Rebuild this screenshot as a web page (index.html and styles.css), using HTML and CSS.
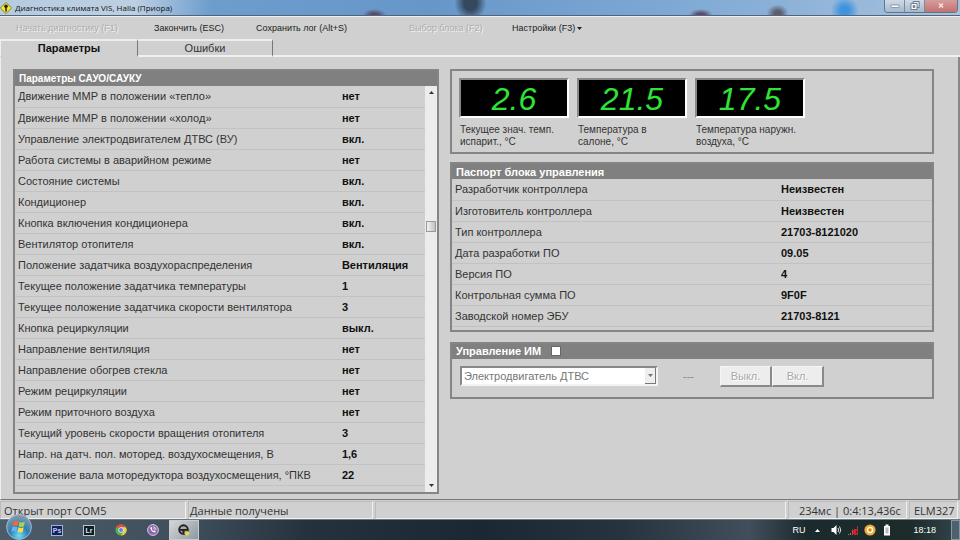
FILE: index.html
```html
<!DOCTYPE html>
<html lang="ru">
<head>
  <meta charset="UTF-8" />
  <meta name="viewport" content="width=device-width, initial-scale=1.0" />
  <title>Диагностика климата VIS, Halla (Приора)</title>
  <link rel="stylesheet" href="styles.css">
</head>
<body>
  <!-- Заголовок окна -->
  <header class="titlebar">
    <svg class="app-icon" viewBox="0 0 12 12"><path d="M6 0.4 11.6 6 6 11.6 0.4 6Z" fill="#f6e928" stroke="#77701c" stroke-width="0.8"/><circle cx="6" cy="4.3" r="1.8" fill="#222"/><path d="M5.3 5h1.5v4.4H5.3Z" fill="#222"/></svg>
    <span class="window-title">Диагностика климата VIS, Halla (Приора)</span>
    <div class="window-buttons">
      <button type="button" aria-label="Свернуть"><svg viewBox="0 0 12 10"><rect x="2" y="4.5" width="8" height="2.6" rx="0.6" fill="#fff" stroke="#66758a" stroke-width="0.7"/></svg></button>
      <button type="button" aria-label="Развернуть"><svg viewBox="0 0 12 10"><path d="M4.2 1h6v6h-6Z" fill="#dde5ee" stroke="#56657a" stroke-width="0.8"/><path d="M2 3h6v6H2Z" fill="#fff" stroke="#56657a" stroke-width="0.8"/><path d="M4 5h2v2H4Z" fill="#8ea0b6" stroke="#56657a" stroke-width="0.6"/></svg></button>
      <button class="close" type="button" aria-label="Закрыть"><svg viewBox="0 0 12 10"><path d="M4 3l4 4M8 3l-4 4" stroke="#f8e4e2" stroke-width="1.5"/></svg></button>
    </div>
  </header>

  <!-- Меню -->
  <nav class="menu">
    <button type="button" disabled>Начать диагностику (F1)</button>
    <button type="button">Закончить (ESC)</button>
    <button type="button">Сохранить лог (Alt+S)</button>
    <button type="button" disabled>Выбор блока (F2)</button>
    <button type="button">Настройки (F3)<svg class="menu-arrow" viewBox="0 0 5 3"><path d="M0 0h5L2.5 3Z" fill="#222"/></svg></button>
  </nav>

  <div class="tabs">
    <button class="tab active" type="button">Параметры</button>
    <button class="tab" type="button">Ошибки</button>
    <div class="tabs-rest"></div>
  </div>

  <main class="page">
    <!-- Список параметров -->
    <section class="group params">
      <h2>Параметры САУО/САУКУ</h2>
      <div class="params-body">
        <div class="params-list">
          <table>
            <tr><th>Движение ММР в положении «тепло»</th><td>нет</td></tr>
            <tr><th>Движение ММР в положении «холод»</th><td>нет</td></tr>
            <tr><th>Управление электродвигателем ДТВС (ВУ)</th><td>вкл.</td></tr>
            <tr><th>Работа системы в аварийном режиме</th><td>нет</td></tr>
            <tr><th>Состояние системы</th><td>вкл.</td></tr>
            <tr><th>Кондиционер</th><td>вкл.</td></tr>
            <tr><th>Кнопка включения кондиционера</th><td>вкл.</td></tr>
            <tr><th>Вентилятор отопителя</th><td>вкл.</td></tr>
            <tr><th>Положение задатчика воздухораспределения</th><td>Вентиляция</td></tr>
            <tr><th>Текущее положение задатчика температуры</th><td>1</td></tr>
            <tr><th>Текущее положение задатчика скорости вентилятора</th><td>3</td></tr>
            <tr><th>Кнопка рециркуляции</th><td>выкл.</td></tr>
            <tr><th>Направление вентиляция</th><td>нет</td></tr>
            <tr><th>Направление обогрев стекла</th><td>нет</td></tr>
            <tr><th>Режим рециркуляции</th><td>нет</td></tr>
            <tr><th>Режим приточного воздуха</th><td>нет</td></tr>
            <tr><th>Текущий уровень скорости вращения отопителя</th><td>3</td></tr>
            <tr><th>Напр. на датч. пол. моторед. воздухосмещения, В</th><td>1,6</td></tr>
            <tr><th>Положение вала моторедуктора воздухосмещения, °ПКВ</th><td>22</td></tr>
            <tr><th>Напр. на датч. пол. моторед. воздухораспределения, В</th><td>0,9</td></tr>
          </table>
        </div>
        <div class="scrollbar">
          <svg viewBox="0 0 5 3"><path d="M0 3h5L2.5 0Z" fill="#333"/></svg>
          <span class="space-above"></span>
          <span class="thumb"></span>
          <span class="space-below"></span>
          <svg viewBox="0 0 5 3"><path d="M0 0h5L2.5 3Z" fill="#333"/></svg>
        </div>
      </div>
    </section>

    <div class="side">
      <!-- Температуры -->
      <section class="group gauges">
        <div class="gauge"><output>2.6</output><p>Текущее знач. темп. испарит., °C</p></div>
        <div class="gauge"><output>21.5</output><p>Температура в салоне, °C</p></div>
        <div class="gauge"><output>17.5</output><p>Температура наружн. воздуха, °C</p></div>
      </section>

      <section class="group passport">
        <h2>Паспорт блока управления</h2>
        <table>
          <tr><th>Разработчик контроллера</th><td>Неизвестен</td></tr>
          <tr><th>Изготовитель контроллера</th><td>Неизвестен</td></tr>
          <tr><th>Тип контроллера</th><td>21703-8121020</td></tr>
          <tr><th>Дата разработки ПО</th><td>09.05</td></tr>
          <tr><th>Версия ПО</th><td>4</td></tr>
          <tr><th>Контрольная сумма ПО</th><td>9F0F</td></tr>
          <tr><th>Заводской номер ЭБУ</th><td>21703-8121</td></tr>
        </table>
      </section>

      <section class="group control">
        <h2><label for="controlOn">Управление ИМ</label><input type="checkbox" id="controlOn"></h2>
        <div class="control-row">
          <div class="select-box">
            <select aria-label="Исполнительный механизм" disabled>
              <option>Электродвигатель ДТВС</option>
            </select>
            <span class="select-arrow"><svg viewBox="0 0 5 3"><path d="M0 0h5L2.5 3Z" fill="#777"/></svg></span>
          </div>
          <span class="state">---</span>
          <div class="switch">
            <button type="button" disabled>Выкл.</button>
            <button type="button" disabled>Вкл.</button>
          </div>
        </div>
      </section>
    </div>
  </main>

  <!-- Строка состояния -->
  <footer class="statusbar">
    <span class="port">Открыт порт COM5</span>
    <span class="data">Данные получены</span>
    <span class="empty"></span>
    <span class="time">234мс | 0:4:13,436с</span>
    <span class="adapter">ELM327</span>
  </footer>

  <!-- Панель задач -->
  <div class="taskbar">
    <button class="task start" type="button" aria-label="Пуск"><svg viewBox="0 0 26 26">
      <defs><radialGradient id="orb" cx="50%" cy="85%" r="75%"><stop offset="0" stop-color="#6fe0f6"/><stop offset="0.5" stop-color="#2b7fb4"/><stop offset="1" stop-color="#7d97ac"/></radialGradient></defs>
      <circle cx="13" cy="13" r="12.4" fill="url(#orb)" stroke="#a9c9dc" stroke-width="0.8"/>
      <path d="M7.5 8q2.6-1.800 5.200-.5l-1 4.600q-2.600-1.200-5.300.3Z" fill="#ef6a35"/><path d="M13.600 7.900q2.500 1.200 5.300-.2l-1 4.600q-2.600 1.300-5.300 0Z" fill="#a5d651"/>
      <path d="M6.200 13.300q2.600-1.500 5.200-.3l-1 4.600q-2.600-1.300-5.200.3Z" fill="#63b5ef"/><path d="M12.400 13.300q2.600 1.200 5.300 0l-1 4.600q-2.700 1.300-5.300 0Z" fill="#fbd94f"/>
    </svg></button>
    <button class="task" type="button"><span class="adobe ps">Ps</span></button>
    <button class="task" type="button"><span class="adobe lr">Lr</span></button>
    <button class="task" type="button" aria-label="Chrome"><svg viewBox="0 0 12 12"><circle cx="6" cy="6" r="5.6" fill="#5aab4c"/><path d="M6 6 1.1 3.2A5.6 5.6 0 0 1 10.9 3.2Z" fill="#db5143"/><path d="M6 3.2h4.9A5.6 5.6 0 0 1 6 11.6l2.4-4.2Z" fill="#f5cc45"/><circle cx="6" cy="6" r="2.7" fill="#eee"/><circle cx="6" cy="6" r="2" fill="#4b8bd8"/></svg></button>
    <button class="task" type="button" aria-label="Viber"><svg viewBox="0 0 12 12"><circle cx="6" cy="6" r="5.4" fill="#8b68aa" stroke="#d8c9e4" stroke-width="1"/><path d="M3.5 3.4c.7-.9 1.2-.3 1.6.5.2.5-.5.7-.3 1.2.4.9 1 1.5 1.8 1.8.5.2.7-.6 1.2-.3.9.5 1.2.9.4 1.6C6.7 9.1 2.8 5.6 3.5 3.4Z" fill="#fff"/><path d="M6.2 2.8q2.7.2 2.9 3M6.3 4.2q1.3.2 1.5 1.5" fill="none" stroke="#fff" stroke-width="0.7"/></svg></button>
    <button class="task current" type="button" aria-label="Диагностика"><svg viewBox="0 0 12 12"><circle cx="5.5" cy="5.6" r="4.3" fill="#aaa" stroke="#222" stroke-width="1.9"/><path d="M2 5h7v1.8H6.8L6.3 9H4.7L4.2 6.8H2Z" fill="#222"/><path d="M9 6.7 11.8 9.3 9 11.9 6.2 9.3Z" fill="#eadb45"/></svg></button>
    <div class="tray">
      <span class="lang">RU</span>
      <svg class="tray-up" viewBox="0 0 5 3"><path d="M0 3h5L2.5 0Z" fill="#fff"/></svg>
      <svg viewBox="0 0 12 12"><path d="M1.5 4h2L6.5 1v10l-3-3h-2Z" fill="#fff"/><path d="M8 4q1.3 2 0 4M9.5 2.5q2.5 3.5 0 7" fill="none" stroke="#ddd"/></svg>
      <svg viewBox="0 0 12 12"><path d="M1 10h1v1H1ZM3 9h1v2H3ZM5 7h1v4H5Z" fill="#b96a6a"/><path d="M7 5h2v6H7ZM10 2h1v9h-1Z" fill="#a33"/><path d="M5 5.5l5 5M10 5.5l-5 5" stroke="#c8262b" stroke-width="1.6"/></svg>
      <svg viewBox="0 0 12 12"><circle cx="6" cy="6" r="5.6" fill="#efaa31"/><circle cx="6" cy="6" r="2.6" fill="none" stroke="#fff" stroke-width="1.3"/><circle cx="6" cy="6" r="1" fill="#c97d12"/></svg>
      <svg viewBox="0 0 12 12"><path d="M4.5.5h3V2H9v9.500H3V2h1.500Z" fill="#fff"/><path d="M4.5 3.5h3v6h-3Z" fill="#bbb"/></svg>
      <span class="clock">18:18</span>
    </div>
    <button class="show-desktop" type="button" aria-label="Свернуть все окна"></button>
  </div>
</body>
</html>
```
FILE: styles.css
```css
* {
  box-sizing: border-box;
}
body {
  margin: 0;
  height: 100vh;
  display: flex;
  flex-direction: column;
  overflow: hidden;
  background: #d0d0d0;
  color: #333;
  font-family: "Liberation Sans", Arial, sans-serif;
  font-size: 11px;
}
button {
  font-family: inherit;
  padding: 0;
  margin: 0;
  border: none;
  background: none;
  color: inherit;
}
svg {
  display: block;
  flex: none;
}

/* Заголовок окна: сквозь стекло виден рабочий стол */
.titlebar {
  display: flex;
  align-items: flex-start;
  flex: none;
  height: 16px;
  border-bottom: 1px solid #536478;
  background:
    radial-gradient(ellipse 16px 18px at 49% 20%, #34485e 40%, transparent 100%),
    radial-gradient(ellipse 12px 6px at 73% 100%, #5b4b6d 30%, transparent 100%),
    radial-gradient(ellipse 11px 9px at 81% 90%, #5d5d70 30%, transparent 100%),
    radial-gradient(ellipse 12px 6px at 39% 100%, #5b4b6d 30%, transparent 100%),
    radial-gradient(ellipse 14px 14px at 88% 70%, #3f93df 30%, transparent 100%),
    linear-gradient(to right, #b5cbe0, #bdd0e2 14%, #6d9dcd 22%, #6797c9 45%, #79a5d2 65%, #8ab0d8 80%, #a9c2dc);
}
.app-icon {
  width: 12px;
  height: 12px;
  margin: 2px 3px 0 0;
}
.window-title {
  flex: 1;
  font-family: "Open Sans", sans-serif;
  font-size: 8px;
  line-height: 15px;
  color: #111;
}
.window-buttons {
  display: flex;
  margin-right: 2px;
  border: 1px solid #63758a;
  border-top: none;
  border-radius: 0 0 4px 4px;
  overflow: hidden;
}
.window-buttons button {
  display: flex;
  justify-content: center;
  width: 20px;
  height: 12px;
  border-right: 1px solid #7b8b9e;
  background: linear-gradient(#cfdae6, #a5b8cc);
}
.window-buttons button.close {
  width: 32px;
  border-right: none;
  background: linear-gradient(#d79c9b, #c07270);
}
.window-buttons svg {
  width: 12px;
  height: 11px;
}

/* Меню */
.menu {
  display: grid;
  grid-template-columns: 138px 102px 153px 103px auto;
  justify-content: start;
  flex: none;
  height: 23px;
  padding-left: 16px;
  border-top: 1px solid #eee;
}
.menu button {
  display: flex;
  align-items: center;
  font-size: 9px;
  white-space: nowrap;
  color: #222;
}
.menu button:disabled {
  color: #adadad;
  text-shadow: 1px 1px 0 #f2f2f2;
}
.menu-arrow {
  width: 5px;
  height: 3px;
  margin-left: 2px;
}

/* Вкладки */
.tabs {
  display: flex;
  flex: none;
  height: 18px;
}
.tab {
  width: 135px;
  border-top: 2px solid #ededed;
  border-right: 1px solid #777;
  border-bottom: 2px solid #f0f0f0;
  font-size: 11px;
  line-height: 12px;
}
.tab.active {
  width: 138px;
  border-bottom-color: transparent;
  border-left: 1px solid #f0f0f0;
  font-weight: bold;
  color: #111;
}
.tabs-rest {
  flex: 1;
  border-bottom: 2px solid #f0f0f0;
}

.page {
  display: grid;
  grid-template-columns: 426fr 484fr;
  gap: 11px;
  flex: 1;
  min-height: 0;
  padding: 12px 24px 5px 12px;
  border-left: 1px solid #eee;
  border-right: 2px solid #888;
  border-bottom: 1px solid #777;
}
.group {
  border: 2px solid #858585;
}
.group h2 {
  display: flex;
  align-items: center;
  flex: none;
  height: 15px;
  margin: 0;
  padding: 0 4px;
  background: #808080;
  color: #fff;
  font-size: 11px;
}
table {
  width: 100%;
  border-collapse: collapse;
  table-layout: fixed;
}
th, td {
  height: 21px;
  padding: 0 3px;
  border-bottom: 1px solid #c2c2c2;
  text-align: left;
  white-space: nowrap;
}
th {
  font-weight: normal;
}
td {
  font-weight: bold;
  color: #111;
}

/* Список параметров */
.params {
  display: flex;
  flex-direction: column;
  min-height: 0;
}
.params h2 {
  font-size: 10px;
}
.params-body {
  display: flex;
  flex: 1;
  min-height: 0;
}
.params-list {
  flex: 1;
  overflow: hidden;
}
.params-list th {
  width: 79%;
}
.scrollbar {
  display: flex;
  flex-direction: column;
  align-items: center;
  width: 12px;
  padding: 5px 0;
  background: #ececec;
}
.scrollbar svg {
  width: 5px;
  height: 3px;
}
.space-above {
  flex: 127;
}
.space-below {
  flex: 251;
}
.thumb {
  width: 10px;
  height: 11px;
  border: 1px solid #999;
  background: linear-gradient(to right, #f2f2f2, #c2c2c2);
}

.side {
  display: flex;
  flex-direction: column;
  gap: 8px;
}

/* Температуры */
.gauges {
  display: flex;
  gap: 8px;
  height: 85px;
  padding: 7px;
}
.gauge {
  width: 110px;
}
.gauge output {
  display: block;
  height: 40px;
  border: 2px solid #fff;
  border-top-color: #888;
  border-left-color: #888;
  background: #000;
  color: #2fe437;
  font-family: "Liberation Sans Narrow", "Liberation Sans", sans-serif;
  font-size: 32px;
  font-style: italic;
  line-height: 38px;
  text-align: center;
}
.gauge p {
  margin: 6px 0 0;
  padding: 0 6px 0 1px;
  font-size: 10px;
  line-height: 12px;
}

/* Паспорт */
.passport {
  padding-bottom: 3px;
}
.passport th {
  width: 326px;
}

/* Управление */
.control {
  margin-top: 2px;
}
.control h2 input {
  appearance: none;
  width: 10px;
  height: 10px;
  margin: 0 0 0 10px;
  border: 1px solid #666;
  background: #fff;
}
.control-row {
  display: flex;
  align-items: center;
  padding: 7px 8px 10px;
}
.select-box {
  position: relative;
  width: 198px;
}
select {
  display: block;
  appearance: none;
  width: 100%;
  height: 20px;
  padding: 0 2px;
  border: 2px solid #f2f2f2;
  border-top-color: #888;
  border-left-color: #888;
  border-radius: 0;
  background: #fff;
  color: #777;
  font-family: inherit;
  font-size: 11px;
  opacity: 1;
}
.select-arrow {
  position: absolute;
  top: 2px;
  right: 2px;
  bottom: 2px;
  width: 11px;
  display: flex;
  align-items: center;
  justify-content: center;
  border-right: 1px solid #777;
  border-bottom: 1px solid #777;
  background: #eee;
  pointer-events: none;
}
.select-arrow svg {
  width: 5px;
  height: 3px;
}
.state {
  width: 62px;
  padding-left: 25px;
  color: #888;
}
.switch {
  display: flex;
}
.switch button {
  width: 52px;
  height: 21px;
  border: 1px solid #f6f6f6;
  border-right: 2px solid #8a8a8a;
  border-bottom: 2px solid #8a8a8a;
  background: #ededed;
  color: #aaa;
  font-size: 11px;
  text-shadow: 1px 1px 0 #fff;
}

/* Строка состояния */
.statusbar {
  display: flex;
  flex: none;
  gap: 2px;
  height: 19px;
  padding: 1px 2px 0 0;
  font-family: "Open Sans", sans-serif;
  font-size: 11px;
}
.statusbar span {
  border: 1px solid #f0f0f0;
  border-top-color: #bbb;
  border-left-color: #bbb;
  padding-left: 3px;
  line-height: 17px;
  white-space: nowrap;
}
.statusbar .port {
  width: 186px;
}
.statusbar .data {
  width: 185px;
  padding-left: 1px;
}
.statusbar .empty {
  flex: 1;
}
.statusbar .time {
  width: 119px;
  padding-left: 10px;
}
.statusbar .adapter {
  width: 49px;
  padding-left: 4px;
}

/* Панель задач */
.taskbar {
  display: flex;
  flex: none;
  height: 21px;
  padding-left: 3px;
  border-top: 1px solid #6c7883;
  background: linear-gradient(to right, #4c5c69, #3e4e5b 20%, #25323e 32%, #1b2732 50%, #263440 65%, #414f5c 78%, #1b2a2d 84%, #1c2c2a 95%, #33464e);
}
.task {
  display: flex;
  align-items: center;
  justify-content: center;
  width: 32px;
}
.task svg {
  width: 12px;
  height: 12px;
}
/* кнопка «Пуск» выступает над панелью */
.task.start {
  align-items: flex-end;
}
.task.start svg {
  width: 26px;
  height: 26px;
}
.task.current {
  width: 30px;
  border: 1px solid #c5cbd0;
  background: linear-gradient(135deg, #d5d8da, #8e989f);
}
.adobe {
  width: 12px;
  height: 11px;
  border: 1px solid #9fb4d8;
  background: #17205c;
  color: #b9cdf5;
  font-size: 7px;
  font-weight: bold;
  line-height: 9px;
}
.adobe.lr {
  border-color: #b5c5cf;
  background: #101c26;
  color: #dce8ee;
}
.task:nth-child(2) {
  margin-left: 6px;
}
.tray {
  display: flex;
  align-items: center;
  gap: 5px;
  margin-left: auto;
  color: #fff;
  font-size: 9px;
}
.tray svg {
  width: 12px;
  height: 12px;
}
.tray .tray-up {
  width: 5px;
  height: 3px;
  margin: 0 5px;
}
.clock {
  margin: 0 15px;
}
.show-desktop {
  width: 9px;
  border: 1px solid #8696a2;
  background: #4d606e;
}
```
